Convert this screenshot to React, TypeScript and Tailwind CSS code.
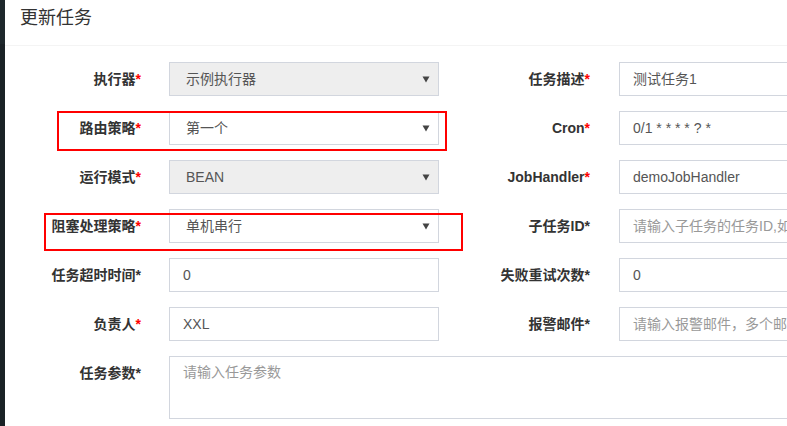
import React from 'react';

// ---------------------------------------------------------------------------
// Field pieces
// ---------------------------------------------------------------------------
const FONT = 'font-["Liberation_Sans","Noto_Sans_CJK_SC",sans-serif]';

interface LabelProps {
  text: string;
  required?: boolean; // red asterisk
}

function Label({ text, required = false }: LabelProps) {
  return (
    <div className="flex h-[34px] items-center justify-end whitespace-nowrap text-[14px] font-bold text-[#333]">
      <span>{text}</span>
      <span className={required ? 'text-[#f00]' : 'text-[#333]'}>*</span>
    </div>
  );
}

function Caret() {
  return (
    <svg width="8" height="7" viewBox="0 0 8 7" className="shrink-0">
      <path d="M0.5 0.5 H7.5 L4 6.5 Z" fill="#444" />
    </svg>
  );
}

interface SelectBoxProps {
  value: string;
  disabled?: boolean;
}

function SelectBox({ value, disabled = false }: SelectBoxProps) {
  return (
    <div
      className={`flex h-[34px] w-[270px] items-center justify-between border border-[#d2d6de] pl-[16px] pr-[8px] text-[14px] text-[#555] ${
        disabled ? 'bg-[#eee]' : 'bg-white'
      }`}
    >
      <span>{value}</span>
      <Caret />
    </div>
  );
}

interface TextBoxProps {
  value?: string;
  placeholder?: string;
}

function TextBox({ value, placeholder }: TextBoxProps) {
  return (
    <div className="flex h-[34px] w-[270px] items-center overflow-hidden whitespace-nowrap border border-[#d2d6de] bg-white px-[13px] text-[14px]">
      {value ? (
        <span className="text-[#555]">{value}</span>
      ) : (
        <span className="text-[#999]">{placeholder}</span>
      )}
    </div>
  );
}

// ---------------------------------------------------------------------------
// Row: label | control | label | control
// ---------------------------------------------------------------------------
interface RowProps {
  left: React.ReactNode;
  leftLabel: LabelProps;
  right: React.ReactNode;
  rightLabel: LabelProps;
  highlight?: 'route' | 'block';
}

function Row({ left, leftLabel, right, rightLabel, highlight }: RowProps) {
  return (
    <div className="relative mb-[15px] flex w-max items-center">
      <div className="w-[136px] shrink-0">
        <Label {...leftLabel} />
      </div>
      <div className="ml-[28px] shrink-0">{left}</div>
      <div className="w-[151px] shrink-0">
        <Label {...rightLabel} />
      </div>
      <div className="ml-[29px] shrink-0">{right}</div>

      {/* red annotation frames drawn over the row */}
      {highlight === 'route' && (
        <div className="pointer-events-none absolute left-[52px] top-0 h-[40px] w-[390px] border-2 border-[#f00]" />
      )}
      {highlight === 'block' && (
        <div className="pointer-events-none absolute left-[39px] top-[4px] h-[38px] w-[419px] border-2 border-[#f00]" />
      )}
    </div>
  );
}

// ---------------------------------------------------------------------------
// App
// ---------------------------------------------------------------------------
export default function App() {
  return (
    <div className={`flex h-[426px] w-[787px] overflow-hidden bg-white ${FONT}`}>
      {/* sidebar edge */}
      <div className="flex w-[5px] shrink-0 flex-col">
        <div className="h-[44px] bg-[#1e282c]" />
        <div className="flex-1 bg-[#1a2226]" />
      </div>

      <div className="flex min-w-0 flex-1 flex-col">
        {/* Header */}
        <div className="flex h-[46px] shrink-0 items-center border-b border-[#f4f4f4] pb-[9px] pl-[15px] text-[18px] text-[#333]">
          更新任务
        </div>

        {/* Form */}
        <div className="pt-[16px]">
          <Row
            leftLabel={{ text: '执行器', required: true }}
            left={<SelectBox value="示例执行器" disabled />}
            rightLabel={{ text: '任务描述', required: true }}
            right={<TextBox value="测试任务1" />}
          />
          <Row
            leftLabel={{ text: '路由策略', required: true }}
            left={<SelectBox value="第一个" />}
            rightLabel={{ text: 'Cron', required: true }}
            right={<TextBox value="0/1 * * * * ? *" />}
            highlight="route"
          />
          <Row
            leftLabel={{ text: '运行模式', required: true }}
            left={<SelectBox value="BEAN" disabled />}
            rightLabel={{ text: 'JobHandler', required: true }}
            right={<TextBox value="demoJobHandler" />}
          />
          <Row
            leftLabel={{ text: '阻塞处理策略', required: true }}
            left={<SelectBox value="单机串行" />}
            rightLabel={{ text: '子任务ID' }}
            right={<TextBox placeholder="请输入子任务的任务ID,如存在多个则逗号分隔" />}
            highlight="block"
          />
          <Row
            leftLabel={{ text: '任务超时时间' }}
            left={<TextBox value="0" />}
            rightLabel={{ text: '失败重试次数' }}
            right={<TextBox value="0" />}
          />
          <Row
            leftLabel={{ text: '负责人', required: true }}
            left={<TextBox value="XXL" />}
            rightLabel={{ text: '报警邮件' }}
            right={<TextBox placeholder="请输入报警邮件，多个邮件地址则逗号分隔" />}
          />

          {/* Params textarea */}
          <div className="flex w-max items-start">
            <div className="w-[136px] shrink-0">
              <Label text="任务参数" />
            </div>
            <div className="ml-[28px] h-[63px] w-[720px] shrink-0 border border-[#d2d6de] bg-white px-[13px] pt-[5px] text-[14px] text-[#999]">
              请输入任务参数
            </div>
          </div>
        </div>
      </div>
    </div>
  );
}
